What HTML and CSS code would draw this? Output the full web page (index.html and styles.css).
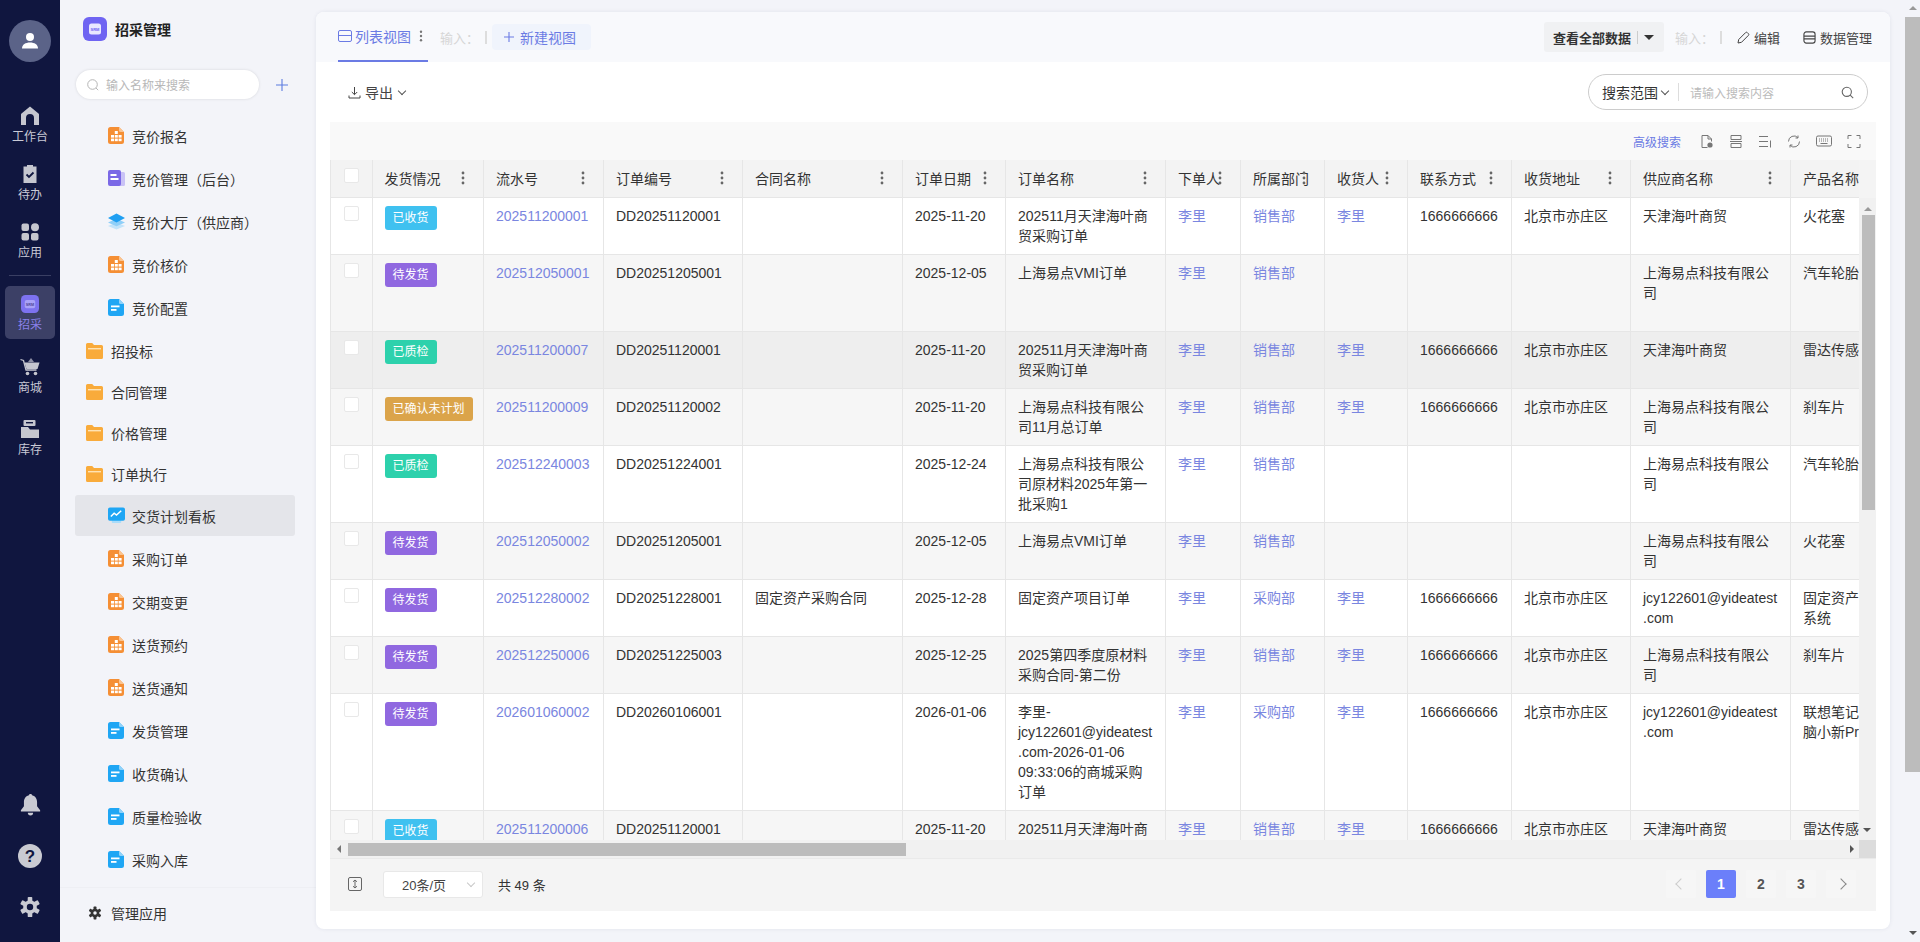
FILE: index.html
```html
<!DOCTYPE html>
<html lang="zh-CN">

<head>
    <meta charset="utf-8">
    <title>招采管理</title>
    <link rel="stylesheet" href="styles.css">
</head>

<body>

    <svg class="defs" aria-hidden="true">
        <symbol id="org" viewBox="0 0 17 17">
            <path d="M2.5 0H11l5 5v9.500a2.500 2.500 0 0 1-2.500 2.500h-11A2.500 2.500 0 0 1 0 14.500v-12A2.500 2.500 0 0 1 2.500 0z" fill="#f58f35"/>
            <path d="M11 0l5 5h-3.500A1.500 1.500 0 0 1 11 3.500z" fill="#fbc48f"/>
            <g fill="#fff"><rect x="6.800" y="4" width="3" height="3"/><rect x="6.800" y="8" width="3" height="2.600"/><rect x="3" y="8" width="3" height="2.600"/><rect x="10.600" y="8" width="3" height="2.600"/><rect x="3" y="11.600" width="3" height="2.600"/><rect x="6.800" y="11.600" width="3" height="2.600"/><rect x="10.600" y="11.600" width="3" height="2.600"/></g>
        </symbol>
        <symbol id="doc" viewBox="0 0 17 17">
            <path d="M2.500 0H11l5 5v9.500a2.500 2.500 0 0 1-2.500 2.500h-11A2.500 2.500 0 0 1 0 14.500v-12A2.500 2.500 0 0 1 2.500 0z" fill="#1fa6f4"/>
            <path d="M11 0l5 5h-3.500A1.500 1.500 0 0 1 11 3.500z" fill="#8fd2fa"/>
            <rect x="3" y="6.500" width="8.500" height="1.800" fill="#fff"/>
            <rect x="3" y="10" width="5.500" height="1.800" fill="#fff"/>
        </symbol>
        <symbol id="pdoc" viewBox="0 0 17 17">
            <rect x="9" y="2" width="8" height="14" rx="1.500" fill="#c9c2f6"/>
            <rect width="13" height="16" rx="2" fill="#7a68e6"/>
            <rect x="2.500" y="4" width="6" height="2" fill="#fff"/>
            <rect x="2.500" y="8" width="8" height="2" fill="#fff"/>
        </symbol>
        <symbol id="layers" viewBox="0 0 18 17">
            <path d="M9 9.500L0 13.200 9 17l9-3.800z" fill="#c1e3fa"/>
            <path d="M9 5.500L0 9.500l9 4 9-4z" fill="#8fcff8"/>
            <path d="M9 0L0 4.800 9 9.500l9-4.700z" fill="#1f9ff2"/>
        </symbol>
        <symbol id="chart" viewBox="0 0 18 17">
            <rect x="4" y="13" width="10" height="3.500" rx="1" fill="#a9dcfa"/>
            <rect width="18" height="14" rx="2" fill="#1fa6f4"/>
            <path d="M3 9.500l3.500-3.500 2.500 2 5-4.500" fill="none" stroke="#fff" stroke-width="1.600"/>
        </symbol>
        <symbol id="folder" viewBox="0 0 17 16">
            <path d="M1.500 0h4.700L8 2h7.500A1.500 1.500 0 0 1 17 3.500v11a1.500 1.500 0 0 1-1.500 1.500h-14A1.500 1.500 0 0 1 0 14.500v-13A1.500 1.500 0 0 1 1.500 0z" fill="#f9ab3b"/>
            <rect x="2" y="5" width="13" height="1.400" fill="#ffe3b3"/>
        </symbol>
        <symbol id="kebab" viewBox="0 0 4 14">
            <circle cx="2" cy="2" r="1.400"/><circle cx="2" cy="7" r="1.400"/><circle cx="2" cy="12" r="1.400"/>
        </symbol>
        <symbol id="db" viewBox="0 0 14 14">
            <rect x="1" y="1" width="12" height="12" rx="2.500" fill="none" stroke="currentColor" stroke-width="1.200"/>
            <path d="M1 5.500h12M1 8.500h12" stroke="currentColor" stroke-width="1.200"/>
        </symbol>
    </svg>

    <nav class="rail">
        <div class="avatar">
            <svg viewBox="0 0 20 20" width="20" height="20"><circle cx="10" cy="6" r="4" fill="#fff"/><path d="M2 17.500c0-4 3.500-6 8-6s8 2 8 6z" fill="#fff"/></svg>
        </div>
        <a class="rail-item">
            <svg viewBox="0 0 20 20" width="20" height="20"><path d="M10 .5L18.500 7.500a1 1 0 0 1 .5 1V19h-5v-7a4 4 0 0 0-8 0v7H1V8.500a1 1 0 0 1 .5-1z" fill="#c5c6cf"/></svg>
            <span>工作台</span>
        </a>
        <a class="rail-item">
            <svg viewBox="0 0 20 20" width="20" height="20"><path d="M3.500 2.500H7V1h6v1.500h3.500V19h-13z" fill="#c5c6cf"/><path d="M6.500 10.500l2.500 2.500 4.500-4.500" fill="none" stroke="#10163f" stroke-width="1.800"/></svg>
            <span>待办</span>
        </a>
        <a class="rail-item">
            <svg viewBox="0 0 20 20" width="20" height="20"><g fill="#c5c6cf"><rect x="1.500" y="1.500" width="7.500" height="7.500" rx="2"/><circle cx="15" cy="5.200" r="4"/><rect x="1.500" y="11" width="7.500" height="7.500" rx="2"/><rect x="11" y="11" width="7.500" height="7.500" rx="2"/></g></svg>
            <span>应用</span>
        </a>
        <div class="rail-sep"></div>
        <a class="rail-item rail-on">
            <svg viewBox="0 0 24 24" width="18" height="18"><rect width="24" height="24" rx="6" fill="#7d72f0"/><rect x="5" y="6.500" width="14" height="11" rx="2.500" fill="#a9a2f7"/><text x="12" y="14" font-size="5" font-weight="700" text-anchor="middle" fill="#4b4699" font-family="Liberation Sans">SRM</text></svg>
            <span>招采</span>
        </a>
        <a class="rail-item">
            <svg viewBox="0 0 20 20" width="20" height="20"><path d="M.5 2.500l3 1 2.500 9.500h10.500" fill="none" stroke="#c5c6cf" stroke-width="1.300"/><path d="M4.500 5.500h15l-2 6.500H6.500z" fill="#c5c6cf"/><path d="M8 5l3-4 3 4z" fill="#8f91a6"/><circle cx="7.500" cy="16.500" r="1.800" fill="#c5c6cf"/><circle cx="15.500" cy="16.500" r="1.800" fill="#c5c6cf"/></svg>
            <span>商城</span>
        </a>
        <a class="rail-item rail-store">
            <svg viewBox="0 0 20 20" width="20" height="20"><rect x="3.500" y="1" width="12" height="6" rx="1" fill="#c5c6cf"/><rect x="6" y="3" width="7" height="1.400" fill="#10163f"/><path d="M1 8h7l2 2.500h9V19H1z" fill="#c5c6cf"/></svg>
            <span>库存</span>
        </a>
        <div class="rail-bottom">
            <svg viewBox="0 0 24 26" width="21" height="24"><path d="M12 1.500c1 0 1.600.6 1.800 1.500C18 4 19.500 7.500 19.500 11v4.500L23 20v1.500H1V20l3.500-4.500V11c0-3.500 1.500-7 5.700-8C10.400 2.100 11 1.500 12 1.500z" fill="#c9cad2"/><path d="M9 23h6a3 3 0 0 1-6 0z" fill="#c9cad2"/></svg>
            <svg viewBox="0 0 24 24" width="24" height="24"><circle cx="12" cy="12" r="12" fill="#c9cad2"/><text x="12" y="18" font-size="17" font-weight="700" text-anchor="middle" fill="#10163f" font-family="Liberation Sans">?</text></svg>
            <svg viewBox="0 0 24 24" width="22" height="22"><path d="M12 4.500a7.500 7.500 0 1 0 0 15 7.500 7.500 0 0 0 0-15zm0 4a3.500 3.500 0 1 1 0 7 3.500 3.500 0 0 1 0-7z" fill="#c9cad2" fill-rule="evenodd"/><g fill="#c9cad2"><rect x="9.500" y="1" width="5" height="5" rx="1"/><rect x="9.500" y="18" width="5" height="5" rx="1"/><rect x="9.500" y="1" width="5" height="5" rx="1" transform="rotate(60 12 12)"/><rect x="9.500" y="18" width="5" height="5" rx="1" transform="rotate(60 12 12)"/><rect x="9.500" y="1" width="5" height="5" rx="1" transform="rotate(120 12 12)"/><rect x="9.500" y="18" width="5" height="5" rx="1" transform="rotate(120 12 12)"/></g></svg>
        </div>
    </nav>

    <aside class="side">
        <div class="side-title">
            <svg viewBox="0 0 24 24" width="24" height="24"><rect width="24" height="24" rx="6" fill="#6f64f2"/><rect x="6" y="6.500" width="12" height="11" rx="2.500" fill="#e9e7ff"/><text x="12" y="13.600" font-size="4" font-weight="700" text-anchor="middle" fill="#6f64f2" font-family="Liberation Sans">SRM</text></svg>
            <h1>招采管理</h1>
        </div>
        <div class="side-search">
            <div class="side-input">
                <svg viewBox="0 0 12 12" width="12" height="12"><circle cx="5.500" cy="5.500" r="4.800" fill="none" stroke="#b5b5b5"/><path d="M9 9l2.200 2.200" stroke="#b5b5b5"/></svg>
                <span>输入名称来搜索</span>
            </div>
            <svg viewBox="0 0 12 12" width="12" height="12"><path d="M6 0v12M0 6h12" stroke="#5b7be0" stroke-width="1.100"/></svg>
        </div>
        <ul class="tree">
            <li class="leaf"><svg width="17" height="17"><use href="#org"/></svg>竞价报名</li>
            <li class="leaf"><svg width="17" height="17"><use href="#pdoc"/></svg>竞价管理（后台）</li>
            <li class="leaf"><svg width="17" height="17"><use href="#layers"/></svg>竞价大厅（供应商）</li>
            <li class="leaf"><svg width="17" height="17"><use href="#org"/></svg>竞价核价</li>
            <li class="leaf"><svg width="17" height="17"><use href="#doc"/></svg>竞价配置</li>
            <li class="branch"><svg width="17" height="16"><use href="#folder"/></svg>招投标</li>
            <li class="branch"><svg width="17" height="16"><use href="#folder"/></svg>合同管理</li>
            <li class="branch"><svg width="17" height="16"><use href="#folder"/></svg>价格管理</li>
            <li class="branch"><svg width="17" height="16"><use href="#folder"/></svg>订单执行</li>
            <li class="leaf leaf-on"><svg width="17" height="17"><use href="#chart"/></svg>交货计划看板</li>
            <li class="leaf"><svg width="17" height="17"><use href="#org"/></svg>采购订单</li>
            <li class="leaf"><svg width="17" height="17"><use href="#org"/></svg>交期变更</li>
            <li class="leaf"><svg width="17" height="17"><use href="#org"/></svg>送货预约</li>
            <li class="leaf"><svg width="17" height="17"><use href="#org"/></svg>送货通知</li>
            <li class="leaf"><svg width="17" height="17"><use href="#doc"/></svg>发货管理</li>
            <li class="leaf"><svg width="17" height="17"><use href="#doc"/></svg>收货确认</li>
            <li class="leaf"><svg width="17" height="17"><use href="#doc"/></svg>质量检验收</li>
            <li class="leaf"><svg width="17" height="17"><use href="#doc"/></svg>采购入库</li>
        </ul>
        <div class="side-foot">
            <svg viewBox="0 0 24 24" width="14" height="14"><path d="M12 4.500a7.500 7.500 0 1 0 0 15 7.500 7.500 0 0 0 0-15zm0 4.500a3 3 0 1 1 0 6 3 3 0 0 1 0-6z" fill="#333" fill-rule="evenodd"/><g fill="#333"><rect x="9.500" y="1" width="5" height="5" rx="1"/><rect x="9.500" y="18" width="5" height="5" rx="1"/><rect x="9.500" y="1" width="5" height="5" rx="1" transform="rotate(60 12 12)"/><rect x="9.500" y="18" width="5" height="5" rx="1" transform="rotate(60 12 12)"/><rect x="9.500" y="1" width="5" height="5" rx="1" transform="rotate(120 12 12)"/><rect x="9.500" y="18" width="5" height="5" rx="1" transform="rotate(120 12 12)"/></g></svg>
            管理应用
        </div>
    </aside>

    <main class="card">
        <div class="tabs">
            <a class="tab">
                <svg viewBox="0 0 14 12" width="14" height="12"><rect x=".5" y=".5" width="13" height="11" rx="1.500" fill="none" stroke="currentColor"/><path d="M.5 5.500h13" stroke="currentColor"/></svg>
                列表视图
                <svg class="tab-more" width="4" height="12"><use href="#kebab"/></svg>
            </a>
            <span class="ghost">输入：</span>
            <span class="ghost-bar"></span>
            <a class="new-view">
                <svg viewBox="0 0 10 10" width="10" height="10"><path d="M5 0v10M0 5h10" stroke="currentColor" stroke-width="1.100"/></svg>
                新建视图
            </a>
            <div class="tabs-right">
                <div class="see-all">
                    <b>查看全部数据</b>
                    <i class="see-bar"></i>
                    <i class="see-arrow"></i>
                </div>
                <span class="ghost ghost-r">输入：</span>
                <span class="ghost-bar"></span>
                <a class="act act-edit">
                    <svg viewBox="0 0 13 13" width="13" height="13"><path d="M1 12l.7-3.500L8.600 1.600a1.200 1.200 0 0 1 1.700 0l1.100 1.100a1.200 1.200 0 0 1 0 1.700L4.500 11.300z" fill="none" stroke="currentColor"/></svg>
                    编辑
                </a>
                <a class="act">
                    <svg width="13" height="13"><use href="#db"/></svg>
                    数据管理
                </a>
            </div>
        </div>

        <div class="bar">
            <a class="export">
                <svg viewBox="0 0 13 13" width="13" height="13"><path d="M6.500 1v7.500M3.800 6l2.700 2.700L9.200 6M1 9.500V12h11V9.500" fill="none" stroke="#444"/></svg>
                导出
                <i class="chev"></i>
            </a>
            <div class="search">
                <span class="search-scope">搜索范围<i class="chev"></i></span>
                <i class="search-bar"></i>
                <span class="search-hint">请输入搜索内容</span>
                <svg viewBox="0 0 13 13" width="13" height="13"><circle cx="5.800" cy="5.800" r="4.600" fill="none" stroke="#666" stroke-width="1.100"/><path d="M9.200 9.200l3 3" stroke="#666" stroke-width="1.100"/></svg>
            </div>
        </div>

        <section class="grid">
            <div class="grid-tools">
                <a class="adv">高级搜索</a>
                <svg viewBox="0 0 14 14" width="14" height="15"><path d="M7.500 13H2V1h6l3.500 3.500V7M8 1v3.500h3.500" fill="none" stroke="#777"/><circle cx="10" cy="10.500" r="2.600" fill="#777"/></svg>
                <svg viewBox="0 0 14 14" width="14" height="15"><path d="M2 1h10v4H2zM2 9h10v4H2z" fill="none" stroke="#777"/><path d="M1 7h12" stroke="#777"/></svg>
                <svg viewBox="0 0 14 14" width="14" height="15"><path d="M1 2h9M1 7h9M1 12h9M12.500 6v7" fill="none" stroke="#777"/></svg>
                <svg viewBox="0 0 14 14" width="14" height="15"><path d="M1.500 7a5.500 5.500 0 0 1 9.500-3.800M12.500 7A5.500 5.500 0 0 1 3 10.800" fill="none" stroke="#777"/><path d="M11 1v2.500H8.500M3 13v-2.500h2.500" fill="none" stroke="#777"/></svg>
                <svg viewBox="0 0 16 14" width="16" height="15"><rect x=".5" y="1.500" width="15" height="10" rx="1.500" fill="none" stroke="#777"/><path d="M3 4.500h10M3 6.500h10" stroke="#777" stroke-dasharray="1 1"/><path d="M4.500 9h7" stroke="#777"/></svg>
                <svg viewBox="0 0 14 14" width="14" height="15"><path d="M1 4.500V1h3.500M9.500 1H13v3.500M13 9.500V13H9.500M4.500 13H1V9.500" fill="none" stroke="#777"/></svg>
            </div>

            <div class="grid-head">
                <table class="sheet">
                    <colgroup><col class="c-check"><col class="c-state"><col class="c-serial"><col class="c-order"><col class="c-contract"><col class="c-date"><col class="c-name"><col class="c-man"><col class="c-dept"><col class="c-recv"><col class="c-tel"><col class="c-addr"><col class="c-supp"><col class="c-prod"></colgroup>
                    <thead>
                        <tr>
                            <th><i class="check"></i></th>
                            <th>发货情况<svg class="more"><use href="#kebab"/></svg></th>
                            <th>流水号<svg class="more"><use href="#kebab"/></svg></th>
                            <th>订单编号<svg class="more"><use href="#kebab"/></svg></th>
                            <th>合同名称<svg class="more"><use href="#kebab"/></svg></th>
                            <th>订单日期<svg class="more"><use href="#kebab"/></svg></th>
                            <th>订单名称<svg class="more"><use href="#kebab"/></svg></th>
                            <th>下单人<svg class="more"><use href="#kebab"/></svg></th>
                            <th>所属部门<svg class="more"><use href="#kebab"/></svg></th>
                            <th>收货人<svg class="more"><use href="#kebab"/></svg></th>
                            <th>联系方式<svg class="more"><use href="#kebab"/></svg></th>
                            <th>收货地址<svg class="more"><use href="#kebab"/></svg></th>
                            <th>供应商名称<svg class="more"><use href="#kebab"/></svg></th>
                            <th>产品名称</th>
                        </tr>
                    </thead>
                </table>
            </div>

            <div class="grid-body">
                <div class="rows">
                    <table class="sheet">
                        <colgroup><col class="c-check"><col class="c-state"><col class="c-serial"><col class="c-order"><col class="c-contract"><col class="c-date"><col class="c-name"><col class="c-man"><col class="c-dept"><col class="c-recv"><col class="c-tel"><col class="c-addr"><col class="c-supp"><col class="c-prod"></colgroup>
                        <tbody>
                            <tr>
                                <td><i class="check"></i></td><td><span class="tag tag-recv">已收货</span></td><td><a>202511200001</a></td><td>DD20251120001</td><td></td><td>2025-11-20</td><td>202511月天津海叶商贸采购订单</td><td><a>李里</a></td><td><a>销售部</a></td><td><a>李里</a></td><td>1666666666</td><td>北京市亦庄区</td><td>天津海叶商贸</td><td>火花塞</td>
                            </tr>
                            <tr class="odd tall">
                                <td><i class="check"></i></td><td><span class="tag tag-wait">待发货</span></td><td><a>202512050001</a></td><td>DD20251205001</td><td></td><td>2025-12-05</td><td>上海易点VMI订单</td><td><a>李里</a></td><td><a>销售部</a></td><td></td><td></td><td></td><td>上海易点科技有限公司</td><td>汽车轮胎</td>
                            </tr>
                            <tr class="hover">
                                <td><i class="check"></i></td><td><span class="tag tag-qc">已质检</span></td><td><a>202511200007</a></td><td>DD20251120001</td><td></td><td>2025-11-20</td><td>202511月天津海叶商贸采购订单</td><td><a>李里</a></td><td><a>销售部</a></td><td><a>李里</a></td><td>1666666666</td><td>北京市亦庄区</td><td>天津海叶商贸</td><td>雷达传感器</td>
                            </tr>
                            <tr class="odd">
                                <td><i class="check"></i></td><td><span class="tag tag-plan">已确认未计划</span></td><td><a>202511200009</a></td><td>DD20251120002</td><td></td><td>2025-11-20</td><td>上海易点科技有限公司11月总订单</td><td><a>李里</a></td><td><a>销售部</a></td><td><a>李里</a></td><td>1666666666</td><td>北京市亦庄区</td><td>上海易点科技有限公司</td><td>刹车片</td>
                            </tr>
                            <tr>
                                <td><i class="check"></i></td><td><span class="tag tag-qc">已质检</span></td><td><a>202512240003</a></td><td>DD20251224001</td><td></td><td>2025-12-24</td><td>上海易点科技有限公司原材料2025年第一批采购1</td><td><a>李里</a></td><td><a>销售部</a></td><td></td><td></td><td></td><td>上海易点科技有限公司</td><td>汽车轮胎</td>
                            </tr>
                            <tr class="odd">
                                <td><i class="check"></i></td><td><span class="tag tag-wait">待发货</span></td><td><a>202512050002</a></td><td>DD20251205001</td><td></td><td>2025-12-05</td><td>上海易点VMI订单</td><td><a>李里</a></td><td><a>销售部</a></td><td></td><td></td><td></td><td>上海易点科技有限公司</td><td>火花塞</td>
                            </tr>
                            <tr>
                                <td><i class="check"></i></td><td><span class="tag tag-wait">待发货</span></td><td><a>202512280002</a></td><td>DD20251228001</td><td>固定资产采购合同</td><td>2025-12-28</td><td>固定资产项目订单</td><td><a>李里</a></td><td><a>采购部</a></td><td><a>李里</a></td><td>1666666666</td><td>北京市亦庄区</td><td>jcy122601@yideatest<br>.com</td><td>固定资产管理系统</td>
                            </tr>
                            <tr class="odd">
                                <td><i class="check"></i></td><td><span class="tag tag-wait">待发货</span></td><td><a>202512250006</a></td><td>DD20251225003</td><td></td><td>2025-12-25</td><td>2025第四季度原材料采购合同-第二份</td><td><a>李里</a></td><td><a>销售部</a></td><td><a>李里</a></td><td>1666666666</td><td>北京市亦庄区</td><td>上海易点科技有限公司</td><td>刹车片</td>
                            </tr>
                            <tr>
                                <td><i class="check"></i></td><td><span class="tag tag-wait">待发货</span></td><td><a>202601060002</a></td><td>DD20260106001</td><td></td><td>2026-01-06</td><td>李里-<br>jcy122601@yideatest<br>.com-2026-01-06<br>09:33:06的商城采购<br>订单</td><td><a>李里</a></td><td><a>采购部</a></td><td><a>李里</a></td><td>1666666666</td><td>北京市亦庄区</td><td>jcy122601@yideatest<br>.com</td><td>联想笔记本电脑小新Pro</td>
                            </tr>
                            <tr class="odd">
                                <td><i class="check"></i></td><td><span class="tag tag-recv">已收货</span></td><td><a>202511200006</a></td><td>DD20251120001</td><td></td><td>2025-11-20</td><td>202511月天津海叶商贸采购订单</td><td><a>李里</a></td><td><a>销售部</a></td><td><a>李里</a></td><td>1666666666</td><td>北京市亦庄区</td><td>天津海叶商贸</td><td>雷达传感器</td>
                            </tr>
                        </tbody>
                    </table>
                </div>
                <div class="vbar">
                    <i class="arrow arrow-up"></i>
                    <i class="vbar-thumb"></i>
                    <i class="arrow arrow-down"></i>
                </div>
            </div>

            <div class="hbar">
                <i class="arrow arrow-left"></i>
                <i class="hbar-thumb"></i>
                <i class="arrow arrow-right"></i>
                <i class="hbar-corner"></i>
            </div>

            <div class="grid-foot">
                <svg viewBox="0 0 14 14" width="14" height="14"><rect x=".5" y=".5" width="13" height="13" rx="1.500" fill="none" stroke="#666"/><path d="M7 3v8M5 4.800L7 3l2 1.800M5 9.200L7 11l2-1.800" fill="none" stroke="#666"/></svg>
                <div class="size">20条/页<i class="chev chev-light"></i></div>
                <span class="total">共 49 条</span>
                <div class="pages">
                    <a class="page page-off"><i class="ang ang-l"></i></a>
                    <a class="page page-on">1</a>
                    <a class="page">2</a>
                    <a class="page">3</a>
                    <a class="page"><i class="ang ang-r"></i></a>
                </div>
            </div>
        </section>
    </main>

    <div class="pagebar">
        <i class="arrow arrow-up"></i>
        <i class="pagebar-thumb"></i>
        <i class="arrow arrow-down"></i>
    </div>

</body>

</html>
```

FILE: styles.css
```css
* {
    box-sizing: border-box;
}

html,
body {
    height: 100%;
}

body {
    margin: 0;
    display: flex;
    height: 942px;
    overflow: hidden;
    background-color: #f3f4f9;
    color: #333;
    font-family: "Liberation Sans", "Noto Sans CJK SC", sans-serif;
    font-size: 14px;
}

.defs {
    position: absolute;
    width: 0;
    height: 0;
}

i {
    display: block;
    font-style: normal;
}

/* left rail */

.rail {
    width: 60px;
    flex: none;
    display: flex;
    flex-direction: column;
    align-items: center;
    padding-top: 20px;
    background-color: #10163f;
    color: #c9cad6;
    font-size: 12px;
}

.avatar {
    width: 42px;
    height: 42px;
    border-radius: 50%;
    margin-bottom: 34px;
    display: flex;
    align-items: center;
    justify-content: center;
    background-color: #5b6388;
}

.rail-item {
    width: 50px;
    height: 58px;
    display: flex;
    flex-direction: column;
    align-items: center;
    justify-content: center;
    gap: 3px;
    line-height: 16px;
}

.rail-sep {
    width: 42px;
    height: 1px;
    margin: 5px 0 10px;
    background-color: #3a3f63;
}

.rail-on {
    height: 53px;
    padding-top: 3px;
    gap: 4px;
    border-radius: 5px;
    margin-bottom: 8px;
    background-color: #3c4066;
    color: #8a80ea;
}

.rail-store {
    margin-top: 4px;
}

.rail-bottom {
    margin-top: auto;
    padding-bottom: 24px;
    display: flex;
    flex-direction: column;
    align-items: center;
    gap: 28px;
}

/* side menu */

.side {
    width: 256px;
    flex: none;
    display: flex;
    flex-direction: column;
    padding-top: 17px;
}

.side-title {
    display: flex;
    align-items: center;
    gap: 8px;
    padding-left: 23px;
}

.side-title h1 {
    margin: 0;
    font-size: 14px;
    color: #222;
}

.side-search {
    display: flex;
    align-items: center;
    gap: 17px;
    margin: 29px 0 16px 16px;
}

.side-input {
    width: 183px;
    height: 29px;
    border-radius: 15px;
    display: flex;
    align-items: center;
    gap: 7px;
    padding-left: 11px;
    background-color: #fff;
    box-shadow: 0 0 3px rgba(0, 0, 0, 0.12);
    color: #b8b8b8;
    font-size: 12px;
}

.tree {
    list-style: none;
    margin: 0;
    padding: 0 0 0 15px;
    flex: 1;
}

.leaf,
.branch {
    width: 220px;
    height: 41px;
    display: flex;
    align-items: center;
}

.leaf {
    gap: 7px;
    padding-left: 33px;
    margin-bottom: 2px;
}

.branch {
    gap: 8px;
    padding-left: 11px;
}

.branch + .leaf {
    margin-top: 1px;
}

.leaf-on {
    border-radius: 3px;
    background-color: #e4e5ea;
}

.side-foot {
    height: 55px;
    display: flex;
    align-items: center;
    gap: 9px;
    padding: 0 0 4px 28px;
    border-top: 1px solid #eeeff4;
}

/* main card */

.card {
    width: 1574px;
    height: 917px;
    flex: none;
    margin-top: 12px;
    border-radius: 8px;
    display: flex;
    flex-direction: column;
    overflow: hidden;
    background-color: #fff;
    box-shadow: 0 0 4px rgba(30, 40, 90, 0.08);
}

.tabs {
    height: 50px;
    flex: none;
    display: flex;
    align-items: center;
    padding: 0 18px 0 22px;
    background-color: #f8f9fc;
    color: #ccc;
    font-size: 13px;
}

.tab {
    position: relative;
    width: 90px;
    height: 50px;
    display: flex;
    align-items: center;
    gap: 3px;
    border-bottom: 2px solid #6b7be4;
    color: #6b7be4;
    font-size: 14px;
}

.tab-more {
    margin-left: 5px;
    fill: #777;
}

.ghost {
    margin-left: 12px;
    color: #d6d6d6;
}

.ghost-bar {
    width: 2px;
    height: 13px;
    margin-left: 6px;
    background-color: #ddd;
}

.new-view {
    width: 99px;
    height: 26px;
    margin-left: 5px;
    border-radius: 4px;
    display: flex;
    align-items: center;
    gap: 6px;
    padding-left: 12px;
    background-color: #f0f4fc;
    color: #6b7be4;
    font-size: 14px;
}

.tabs-right {
    margin-left: auto;
    display: flex;
    align-items: center;
}

.see-all {
    width: 120px;
    height: 30px;
    border-radius: 3px;
    display: flex;
    align-items: center;
    padding-left: 9px;
    background-color: #f0f1f3;
    color: #333;
}

.see-bar {
    width: 1px;
    height: 13px;
    margin-left: 6px;
    background-color: #ccc;
}

.see-arrow {
    margin-left: 6px;
    border-top: 5px solid #333;
    border-left: 5px solid transparent;
    border-right: 5px solid transparent;
}

.ghost-r {
    margin-left: 11px;
}

.act {
    display: flex;
    align-items: center;
    gap: 4px;
    margin-left: 23px;
    color: #444;
}

.act-edit {
    margin-left: 15px;
}

.bar {
    height: 60px;
    flex: none;
    display: flex;
    align-items: center;
    justify-content: space-between;
    padding: 0 22px 0 32px;
}

.export {
    display: flex;
    align-items: center;
    gap: 4px;
    color: #444;
}

.export .chev {
    margin-left: 2px;
}

.chev {
    width: 6px;
    height: 6px;
    margin: -3px 0 0 4px;
    border-right: 1px solid #555;
    border-bottom: 1px solid #555;
    transform: rotate(45deg);
}

.chev-light {
    border-color: #c8c8c8;
}

.search {
    width: 280px;
    height: 36px;
    border: 1px solid #ccc;
    border-radius: 18px;
    display: flex;
    align-items: center;
    padding: 0 13px;
}

.search-scope {
    display: flex;
    align-items: center;
}

.search-bar {
    width: 1px;
    height: 18px;
    margin: 0 11px 0 10px;
    background-color: #ddd;
}

.search-hint {
    flex: 1;
    color: #bbb;
    font-size: 12px;
}

/* grid */

.grid {
    width: 1546px;
    height: 789px;
    margin-left: 14px;
    display: flex;
    flex-direction: column;
    background-color: #f4f4f4;
}

.grid-tools {
    height: 38px;
    flex: none;
    display: flex;
    align-items: center;
    justify-content: flex-end;
    gap: 15px;
    padding-right: 15px;
    background-color: #f9f9f9;
}

.adv {
    margin-right: 4px;
    color: #6b7be4;
    font-size: 12px;
}

.grid-head {
    height: 38px;
    flex: none;
    width: 1529px;
    overflow: hidden;
}

.grid-body {
    height: 642px;
    flex: none;
    display: flex;
}

.rows {
    width: 1529px;
    flex: none;
    overflow: hidden;
}

.sheet {
    width: 1575px;
    table-layout: fixed;
    border-collapse: separate;
    border-spacing: 0;
}

.c-check { width: 41.5px; }
.c-state { width: 111.5px; }
.c-serial { width: 120px; }
.c-order { width: 139px; }
.c-contract { width: 160px; }
.c-date { width: 103px; }
.c-name { width: 160px; }
.c-man { width: 75px; }
.c-dept { width: 84px; }
.c-recv { width: 83px; }
.c-tel { width: 104px; }
.c-addr { width: 119px; }
.c-supp { width: 160px; }
.c-prod { width: 115px; }

th,
td {
    position: relative;
    padding: 8px 12px;
    border-left: 1px solid #e6e6e6;
    border-bottom: 1px solid #e6e6e6;
    text-align: left;
    vertical-align: top;
    line-height: 20px;
    font-weight: 400;
    overflow-wrap: break-word;
    background-color: #fff;
}

th {
    height: 38px;
    padding-top: 9px;
    background-color: #f3f3f3;
    white-space: nowrap;
}

th:first-child,
td:first-child {
    padding: 8px 0 0 13px;
}

.odd td {
    background-color: #f6f6f6;
}

.hover td {
    background-color: #eee;
}

.tall td {
    height: 77px;
}

td a {
    color: #7a86e0;
}

.check {
    width: 15px;
    height: 15px;
    border: 1px solid #e8e8e8;
    border-radius: 2px;
    background-color: #fff;
}

.more {
    position: absolute;
    top: 11px;
    right: 18px;
    width: 4px;
    height: 14px;
    fill: #666;
}

.tag {
    display: inline-block;
    height: 24px;
    padding: 0 8px;
    border-radius: 3px;
    color: #fff;
    font-size: 12px;
    line-height: 24px;
    vertical-align: top;
    white-space: nowrap;
}

.tag-recv { background-color: #3fc1f0; }
.tag-wait { background-color: #9068e0; }
.tag-qc { background-color: #2dd1ac; }
.tag-plan { background-color: #dba44a; }

/* fake scrollbars */

.vbar {
    width: 17px;
    flex: none;
    position: relative;
    display: flex;
    flex-direction: column;
    align-items: center;
    padding: 9px 0 0 1px;
    background-color: #f1f1f1;
}

.vbar-thumb {
    width: 13px;
    height: 295px;
    margin-top: 4px;
    background-color: #bcbcbc;
}

.vbar .arrow-down {
    position: absolute;
    bottom: 8px;
    left: 4px;
}

.arrow {
    flex: none;
    width: 0;
    height: 0;
    border: 4px solid transparent;
}

.arrow-up {
    border-top: 0;
    border-bottom: 4px solid #999;
}

.arrow-down {
    border-bottom: 0;
    border-top: 4px solid #555;
}

.arrow-left {
    border-left: 0;
    border-right: 4px solid #777;
}

.arrow-right {
    border-right: 0;
    border-left: 4px solid #555;
}

.hbar {
    height: 18px;
    flex: none;
    display: flex;
    align-items: center;
    padding-left: 7px;
    background-color: #f1f1f1;
}

.hbar-thumb {
    width: 558px;
    height: 13px;
    margin-left: 7px;
    background-color: #bcbcbc;
}

.hbar .arrow-right {
    margin-left: auto;
}

.hbar-corner {
    width: 17px;
    height: 18px;
    margin-left: 5px;
    background-color: #dcdcdc;
}

.grid-foot {
    flex: 1;
    display: flex;
    align-items: center;
    padding: 0 0 2px 18px;
    border-top: 1px solid #eaeaea;
    color: #333;
    font-size: 13px;
}

.size {
    width: 100px;
    height: 27px;
    margin-left: 21px;
    border: 1px solid #e8e8e8;
    border-radius: 3px;
    display: flex;
    align-items: center;
    padding-left: 18px;
    background-color: #fff;
    color: #444;
}

.size .chev {
    margin-left: 22px;
}

.total {
    margin-left: 15px;
}

.pages {
    margin-left: auto;
    margin-right: 20px;
    display: flex;
    gap: 10px;
    font-size: 14px;
}

.page {
    width: 30px;
    height: 28px;
    border-radius: 2px;
    display: flex;
    align-items: center;
    justify-content: center;
    background-color: #f6f6f6;
    color: #555;
    font-weight: 700;
}

.page-on {
    background-color: #6b7ffa;
    color: #fff;
}

.ang {
    width: 8px;
    height: 8px;
    border-top: 1.500px solid #888;
    border-right: 1.500px solid #888;
}

.ang-r {
    transform: rotate(45deg);
}

.ang-l {
    border-color: #ccc;
    transform: rotate(-135deg);
}

/* page scrollbar */

.pagebar {
    width: 15px;
    margin-left: 15px;
    flex: none;
    position: relative;
    display: flex;
    flex-direction: column;
    align-items: center;
    padding-top: 6px;
}

.pagebar-thumb {
    width: 15px;
    height: 755px;
    margin-top: 7px;
    background-color: #bcbcbc;
}

.pagebar .arrow-down {
    position: absolute;
    bottom: 7px;
}
```
